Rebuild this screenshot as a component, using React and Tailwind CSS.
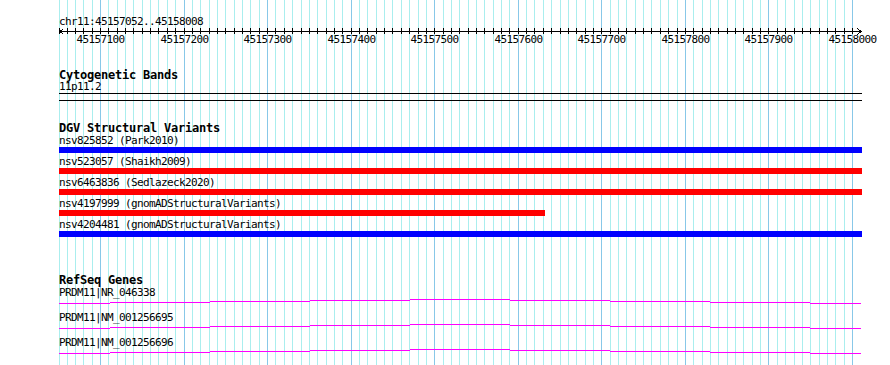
import React from "react";

const START = 45157050;
const ORIGIN = 59;
const gridLines = Array.from({ length: 96 }, (_, i) => {
  const pos = START + i * 10;
  const x = i === 0 ? 59 : Math.round(100 + (pos - 45157100) * 0.83556);
  return { pos, x, major: pos % 100 === 0 };
});
const majors = gridLines.filter((g) => g.major);

const variants = [
  { label: "nsv825852 (Park2010)", color: "blue", width: 803 },
  { label: "nsv523057 (Shaikh2009)", color: "red", width: 803 },
  { label: "nsv6463836 (Sedlazeck2020)", color: "red", width: 803 },
  { label: "nsv4197999 (gnomADStructuralVariants)", color: "red", width: 486 },
  { label: "nsv4204481 (gnomADStructuralVariants)", color: "blue", width: 803 },
];

const genes = ["PRDM11|NR_046338", "PRDM11|NM_001256695", "PRDM11|NM_001256696"];

const geneSegments = [
  [0, 51, 5],
  [51, 151, 4],
  [151, 251, 3],
  [251, 351, 2],
  [351, 451, 1],
  [451, 551, 2],
  [551, 651, 3],
  [651, 751, 4],
  [751, 802, 5],
];

const txt = "text-[11px] tracking-[-0.62px] whitespace-nowrap";
const title = "h-[12px] leading-[12px] text-[12px] font-bold tracking-[-0.22px] whitespace-nowrap";

function Ruler() {
  return (
    <div className="relative h-[40px]">
      <svg width="804" height="7" className="block overflow-visible" shapeRendering="crispEdges">
        <rect x="0" y="3" width="803" height="1" fill="#000" />
        {gridLines.map((g) => (
          <rect key={g.pos} x={g.x - ORIGIN} y="0" width="1" height="6" fill="#000" />
        ))}
        <path d="M4.5 0.5 L1 3.5 L4.5 6.5" fill="none" stroke="#000" strokeWidth="1" />
        <path d="M798.5 0.5 L802 3.5 L798.5 6.5" fill="none" stroke="#000" strokeWidth="1" />
      </svg>
      {majors.map((g) => (
        <div
          key={g.pos}
          className={`absolute top-[5px] h-[13px] leading-[13px] -translate-x-1/2 ${txt}`}
          style={{ left: g.x - ORIGIN + 0.5 }}
        >
          {g.pos}
        </div>
      ))}
    </div>
  );
}

function GeneLine() {
  return (
    <svg width="803" height="6" className="block" shapeRendering="crispEdges">
      {geneSegments.map(([a, b, y]) => (
        <rect key={a} x={a} y={y} width={b - a} height="1" fill="#ff00ff" />
      ))}
    </svg>
  );
}

export default function App() {
  return (
    <div className="relative w-[890px] h-[365px] overflow-hidden bg-white text-black font-['DejaVu_Sans_Mono',monospace]">
      <div className="absolute inset-0">
        {gridLines.map((g) => (
          <div
            key={g.pos}
            className={`absolute top-0 bottom-0 w-px ${g.major ? "bg-[#88c8e8]" : "bg-[#aaeeee]"}`}
            style={{ left: g.x }}
          />
        ))}
      </div>

      <div className="relative pl-[59px] pt-[15px]">
        <div className={`h-[13px] leading-[13px] ${txt}`}>chr11:45157052..45158008</div>
        <Ruler />

        <div className={`mt-[1px] ${title}`}>Cytogenetic Bands</div>
        <div className={`h-[11px] leading-[11px] ${txt}`}>11p11.2</div>
        <div className="mt-[1px] h-[8px] w-[803px] border-y border-black" />

        <div className={`mt-[21px] ${title}`}>DGV Structural Variants</div>
        {variants.map((v, i) => (
          <div key={v.label}>
            <div className={`${i === 0 ? "mt-[1px]" : "mt-[3px]"} h-[11px] leading-[11px] ${txt}`}>
              {v.label}
            </div>
            <div
              className={`mt-[1px] h-[6px] ${v.color === "blue" ? "bg-[#0000ff]" : "bg-[#ff0000]"}`}
              style={{ width: v.width }}
            />
          </div>
        ))}

        <div className={`mt-[37px] ${title}`}>RefSeq Genes</div>
        {genes.map((g, i) => (
          <div key={g}>
            <div className={`${i === 0 ? "mt-[1px]" : "mt-[8px]"} h-[11px] leading-[11px] ${txt}`}>{g}</div>
            <GeneLine />
          </div>
        ))}
      </div>
    </div>
  );
}
